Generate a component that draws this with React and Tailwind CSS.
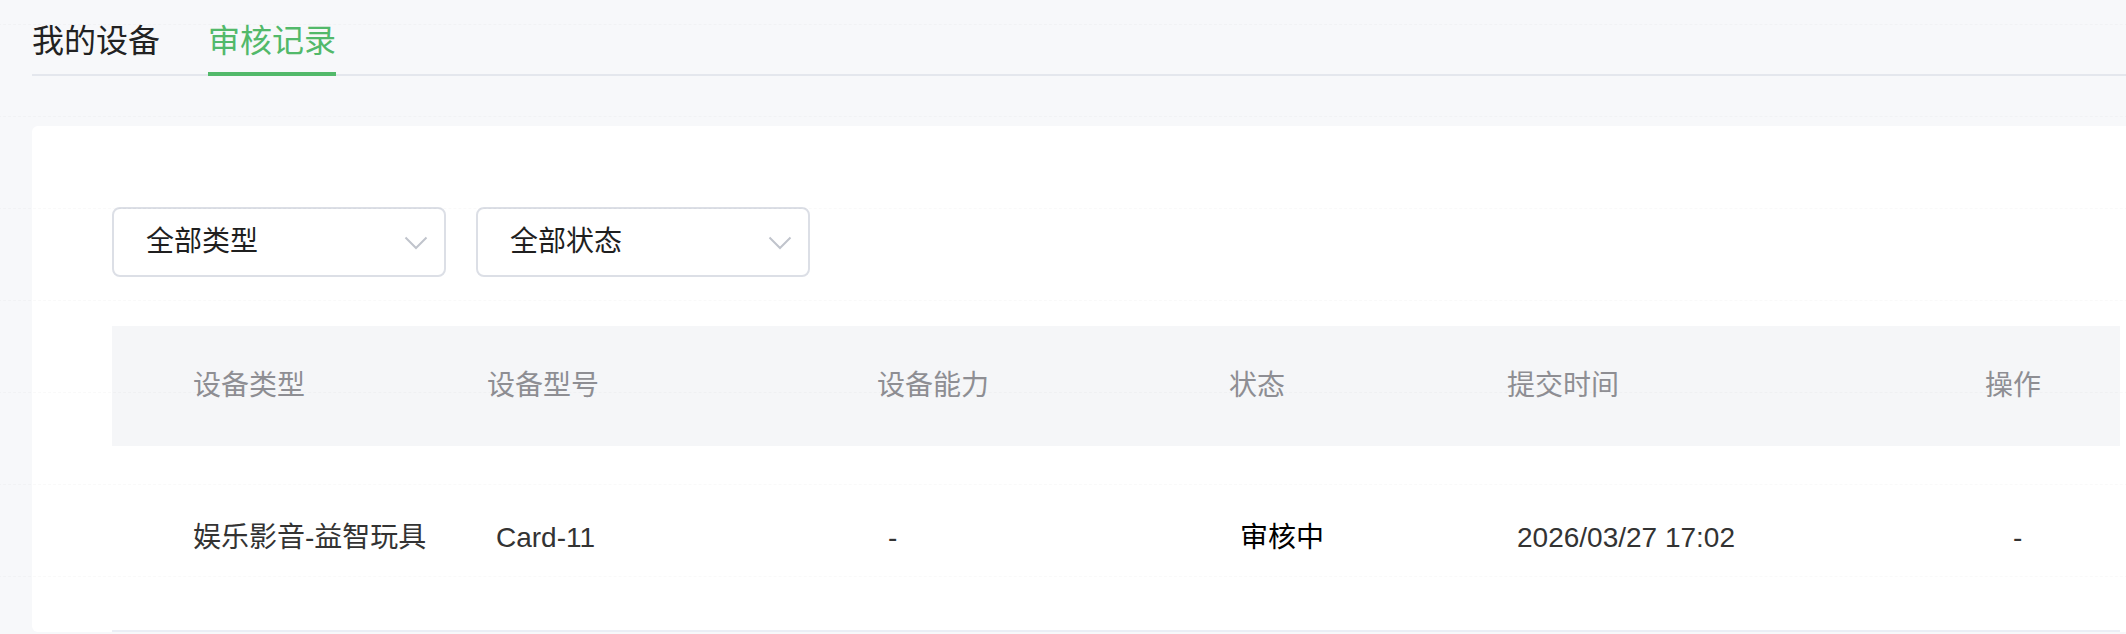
const headers = [
  { label: "设备类型", w: "w-[294px]" },
  { label: "设备型号", w: "w-[390px]" },
  { label: "设备能力", w: "w-[352px]" },
  { label: "状态", w: "w-[278px]" },
  { label: "提交时间", w: "w-[478px]" },
  { label: "操作", w: "flex-1" },
];

const record = {
  type: "娱乐影音-益智玩具",
  model: "Card-11",
  ability: "-",
  status: "审核中",
  time: "2026/03/27 17:02",
  action: "-",
};

const Select = ({ label }) => (
  <div className="w-[334px] h-[70px] border-2 border-[#dcdfe6] rounded-[8px] bg-white flex items-center justify-between pl-[32px] pr-[16px]">
    <span className="text-[28px] text-[#1f1f1f]">{label}</span>
    <svg width="24" height="14" viewBox="0 0 24 14" fill="none" className="mt-[2px]">
      <polyline points="1.5,1.5 12,12 22.5,1.5" stroke="#c0c4cc" strokeWidth="2" />
    </svg>
  </div>
);

// faint tiled watermark over the page
const Watermark = () => (
  <div className="absolute top-[24px] left-[-67px] pointer-events-none select-none">
    {Array.from({ length: 7 }).map((_, r) => (
      <div key={r} className="h-[92px] flex items-center border-t border-dashed border-[rgba(0,0,0,0.025)]">
        {Array.from({ length: 6 }).map((_, c) => (
          <span key={c} className="w-[430px] shrink-0 text-[26px] text-[rgba(0,0,0,0.012)]">
            NEJYYHCTVFZ
          </span>
        ))}
      </div>
    ))}
  </div>
);

export default function App() {
  return (
    <div className="relative h-[634px] w-full overflow-hidden bg-[#f7f8fa] font-['Liberation_Sans','Noto_Sans_CJK_SC',sans-serif]">
      <div className="ml-[32px] flex gap-[48px] border-b-2 border-[#e4e7ed]">
        <div className="h-[76px] -mb-[2px] pt-[19px] leading-[44px] text-[32px] text-[#222] border-b-4 border-transparent">
          我的设备
        </div>
        <div className="h-[76px] -mb-[2px] pt-[19px] leading-[44px] text-[32px] text-[#52b96a] border-b-4 border-[#52b96a]">
          审核记录
        </div>
      </div>

      <div className="ml-[32px] mt-[50px] w-[2168px] bg-white rounded-[6px] pt-[81px] px-[80px]">
        <div className="flex gap-[30px]">
          <Select label="全部类型" />
          <Select label="全部状态" />
        </div>

        <div className="mt-[49px]">
          <div className="h-[120px] bg-[#f5f6f8] flex items-center pl-[81px] text-[28px] text-[#8e8e93]">
            {headers.map((h) => (
              <div key={h.label} className={h.w}>{h.label}</div>
            ))}
          </div>
          <div className="h-[186px] border-b-2 border-[#ebeef5] flex items-center pl-[81px] text-[28px] text-[#333]">
            <div className="w-[303px]">{record.type}</div>
            <div className="w-[392px]">{record.model}</div>
            <div className="w-[352px]">{record.ability}</div>
            <div className="w-[277px] text-black">{record.status}</div>
            <div className="w-[496px]">{record.time}</div>
            <div className="flex-1">{record.action}</div>
          </div>
        </div>
      </div>

      <Watermark />
    </div>
  );
}
